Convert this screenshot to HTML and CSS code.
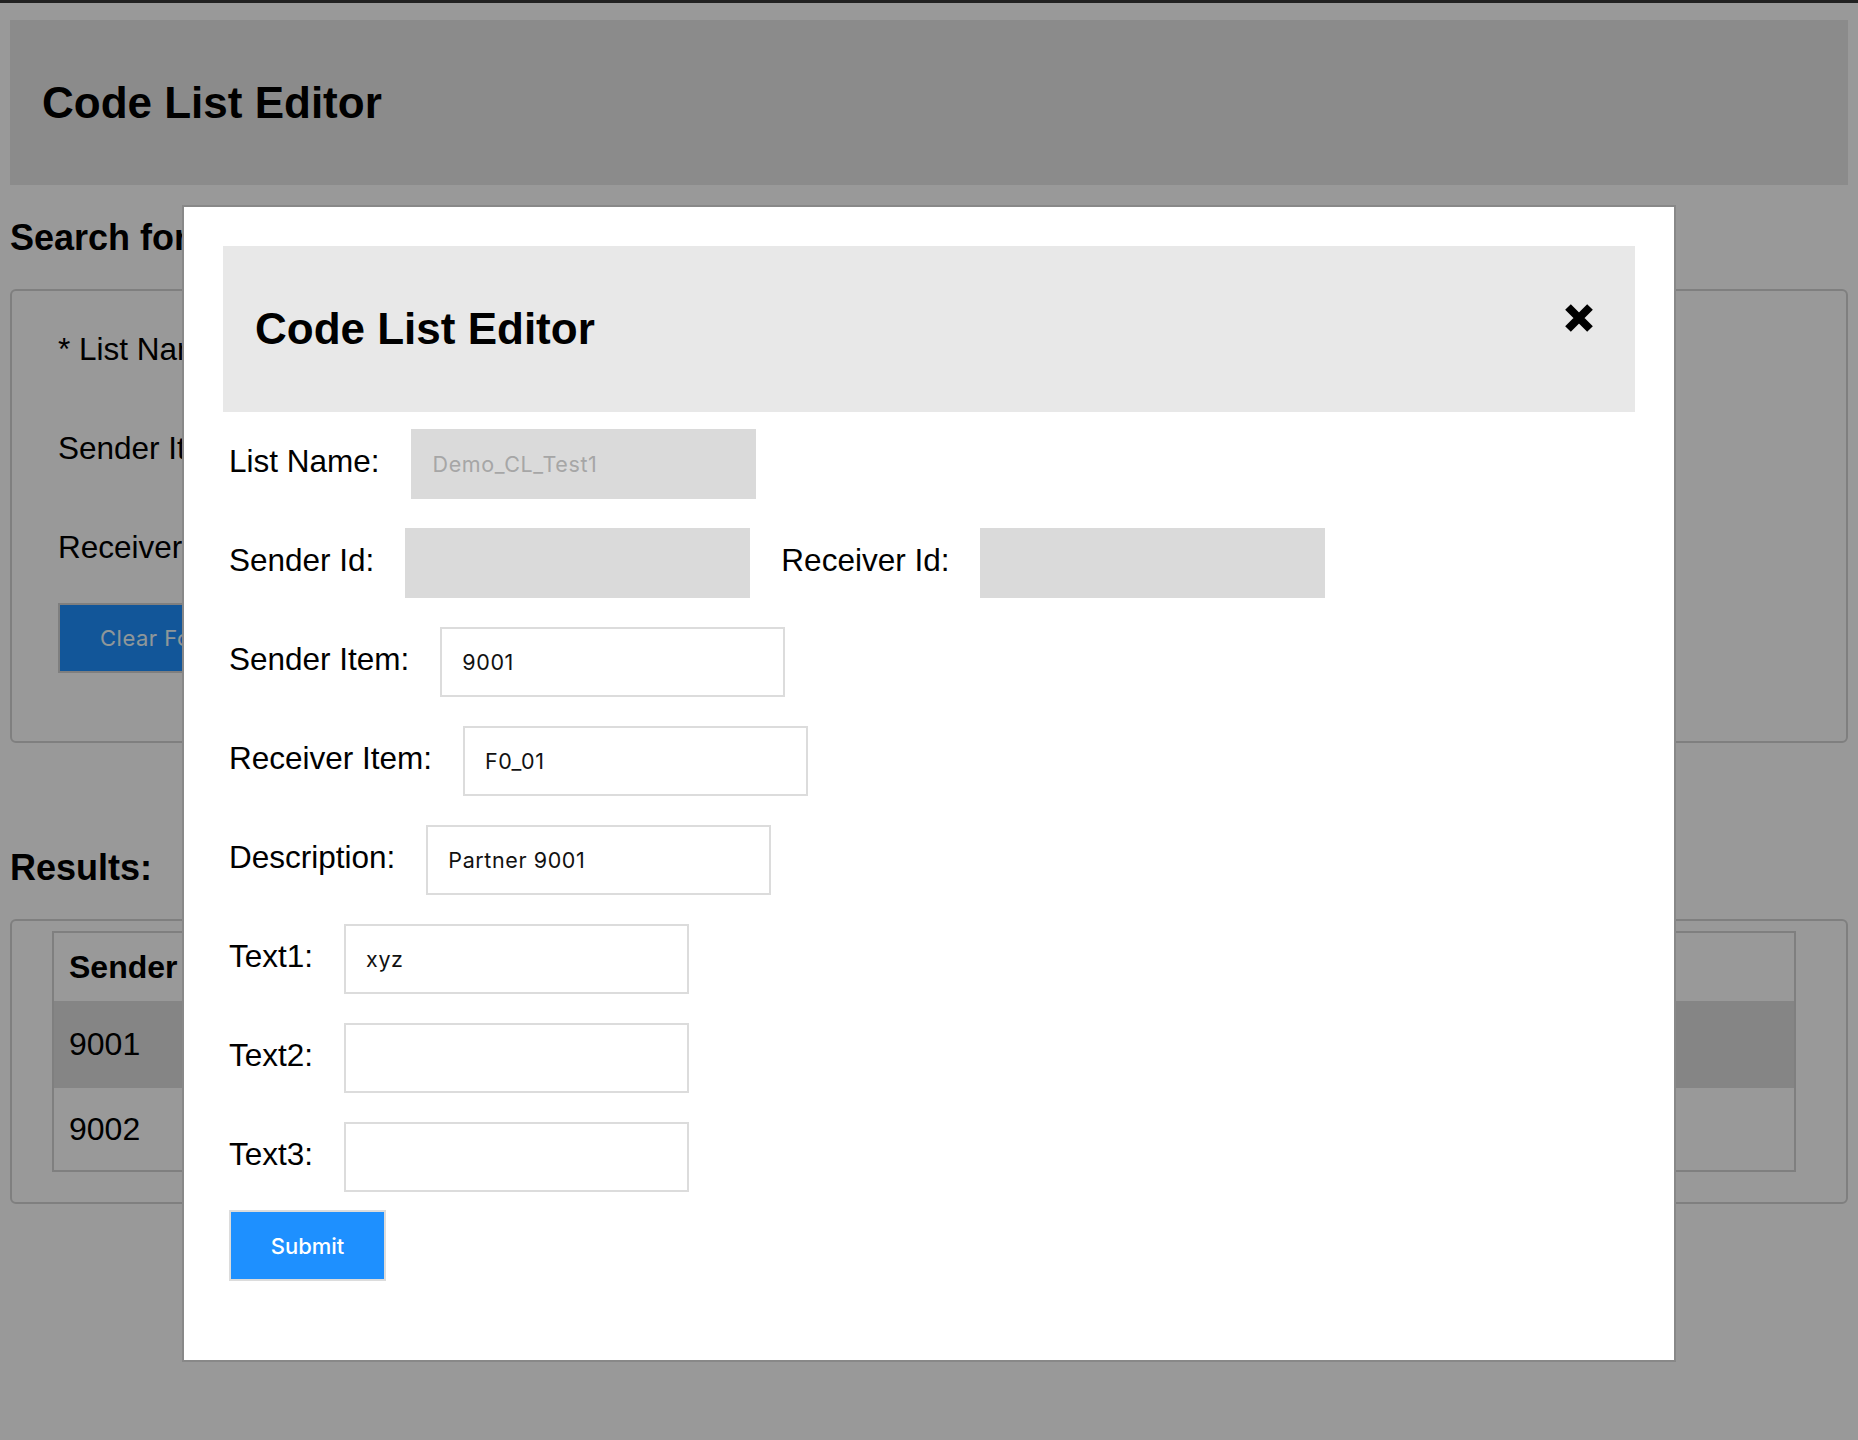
FILE: index.html
```html
<!DOCTYPE html>
<html lang="en">
<head>
<meta charset="utf-8">
<title>Code List Editor</title>
<link rel="stylesheet" href="styles.css">
</head>
<body>
<div class="topline"></div>
<div class="page">
  <header class="page-header"><h1>Code List Editor</h1></header>

  <h2 class="section-title">Search for Code List Items:</h2>
  <section class="panel search-panel">
    <div class="frow"><label for="s-list">* List Name:</label><input id="s-list" class="field" type="text"></div>
    <div class="frow"><label for="s-sender">Sender Item:</label><input id="s-sender" class="field" type="text"></div>
    <div class="frow"><label for="s-receiver">Receiver Item:</label><input id="s-receiver" class="field" type="text"></div>
    <button class="btn-clear" type="button">Clear Form</button>
  </section>

  <h2 class="section-title results-title">Results:</h2>
  <section class="panel results-panel">
    <table class="results">
      <thead>
        <tr><th>Sender Item</th><th>Receiver Item</th><th>Description</th><th>Text1</th></tr>
      </thead>
      <tbody>
        <tr class="selected"><td>9001</td><td>F0_01</td><td>Partner 9001</td><td>xyz</td></tr>
        <tr><td>9002</td><td>F0_02</td><td>Partner 9002</td><td></td></tr>
      </tbody>
    </table>
  </section>
</div>

<div class="overlay">
  <div class="modal">
    <div class="modal-header">
      <h2>Code List Editor</h2>
      <button class="close" type="button" aria-label="Close">
        <svg width="28" height="28" viewBox="0 0 28 28"><path d="M3 3L25 25M25 3L3 25" stroke="#000" stroke-width="8" fill="none"/></svg>
      </button>
    </div>
    <form class="modal-form">
      <div class="frow"><label for="m-list">List Name:</label><input id="m-list" class="field" type="text" value="Demo_CL_Test1" readonly></div>
      <div class="frow">
        <label for="m-sid">Sender Id:</label><input id="m-sid" class="field" type="text" readonly>
        <label for="m-rid">Receiver Id:</label><input id="m-rid" class="field" type="text" readonly>
      </div>
      <div class="frow"><label for="m-sitem">Sender Item:</label><input id="m-sitem" class="field" type="text" value="9001"></div>
      <div class="frow"><label for="m-ritem">Receiver Item:</label><input id="m-ritem" class="field" type="text" value="F0_01"></div>
      <div class="frow"><label for="m-desc">Description:</label><input id="m-desc" class="field" type="text" value="Partner 9001"></div>
      <div class="frow"><label for="m-t1">Text1:</label><input id="m-t1" class="field" type="text" value="xyz"></div>
      <div class="frow"><label for="m-t2">Text2:</label><input id="m-t2" class="field" type="text"></div>
      <div class="frow"><label for="m-t3">Text3:</label><input id="m-t3" class="field" type="text"></div>
      <button class="btn-submit" type="submit">Submit</button>
    </form>
  </div>
</div>
</body>
</html>
```

FILE: styles.css
```css
body {
  margin: 0;
  background: #ffffff;
  color: #000;
  font-family: "Liberation Sans", Arial, Helvetica, sans-serif;
}

.topline {
  height: 3px;
  background: #383838;
}

.page {
  padding: 0 10px;
}

.page-header {
  margin-top: 17px;
  height: 165px;
  background: #e8e8e8;
  display: flex;
  align-items: center;
  padding-left: 32px;
}

.page-header h1 {
  margin: 0;
  font-size: 44px;
  font-weight: 700;
}

.section-title {
  margin: 31px 0 29px;
  font-size: 36px;
  line-height: 44px;
  font-weight: 700;
}

.results-title {
  margin-top: 103px;
}

.panel {
  border: 2px solid #d4d4d4;
  border-radius: 6px;
}

.search-panel {
  padding: 26px 46px 68px;
  display: flex;
  flex-direction: column;
  align-items: flex-start;
}

.frow {
  display: flex;
  align-items: baseline;
  gap: 31px;
}

.frow + .frow {
  margin-top: 29px;
}

.frow label {
  font-size: 31.5px;
}

.field {
  box-sizing: border-box;
  width: 345px;
  height: 70px;
  margin: 0;
  padding: 0 20px;
  border: 2px solid #dcdcdc;
  border-radius: 0;
  background: #fff;
  color: #111;
  font-family: "Inter", "Noto Sans", sans-serif;
  font-size: 21.5px;
  letter-spacing: 0.6px;
  outline: none;
}

.field[readonly] {
  background: #dadada;
  border-color: #dadada;
  color: #a6a6a6;
}

.btn-clear {
  margin-top: 18px;
  box-sizing: border-box;
  height: 70px;
  padding: 0 40px;
  background: #1e90ff;
  border: 2px solid #d4d4d4;
  color: #eefcff;
  font-family: "Inter", "Noto Sans", sans-serif;
  font-size: 22px;
  letter-spacing: 0.5px;
}

.results-panel {
  padding: 10px 50px 30px 40px;
}

.results {
  width: 100%;
  border: 2px solid #d4d4d4;
  border-spacing: 0;
  font-size: 32px;
}

.results th,
.results td {
  padding: 0 15px;
  text-align: left;
  width: 25%;
}

.results th {
  height: 68px;
  font-weight: 700;
}

.results tbody tr:first-child td {
  height: 87px;
}

.results tbody tr:last-child td {
  height: 82px;
}

.results tr.selected td {
  background: #dedede;
}

.overlay {
  position: fixed;
  inset: 0;
  background: rgba(0, 0, 0, 0.4);
  display: flex;
  justify-content: center;
  align-items: flex-start;
  padding-top: 205px;
}

.modal {
  box-sizing: border-box;
  width: 1494px;
  background: #fff;
  border: 2px solid #888;
  padding: 39px;
}

.modal-header {
  height: 166px;
  background: #e8e8e8;
  display: flex;
  align-items: center;
  justify-content: space-between;
  padding: 0 42px 0 32px;
}

.modal-header h2 {
  margin: 0;
  font-size: 44px;
  font-weight: 700;
}

.close {
  display: flex;
  padding: 0;
  margin-bottom: 22px;
  border: 0;
  background: none;
}

.modal-form {
  padding: 17px 0 40px 6px;
  display: flex;
  flex-direction: column;
  align-items: flex-start;
}

.btn-submit {
  margin-top: 18px;
  box-sizing: border-box;
  width: 157px;
  height: 71px;
  background: #1e90ff;
  border: 2px solid #dcdcdc;
  color: #fff;
  font-family: "Inter", "Noto Sans", sans-serif;
  font-size: 22px;
  font-weight: 500;
}
```
